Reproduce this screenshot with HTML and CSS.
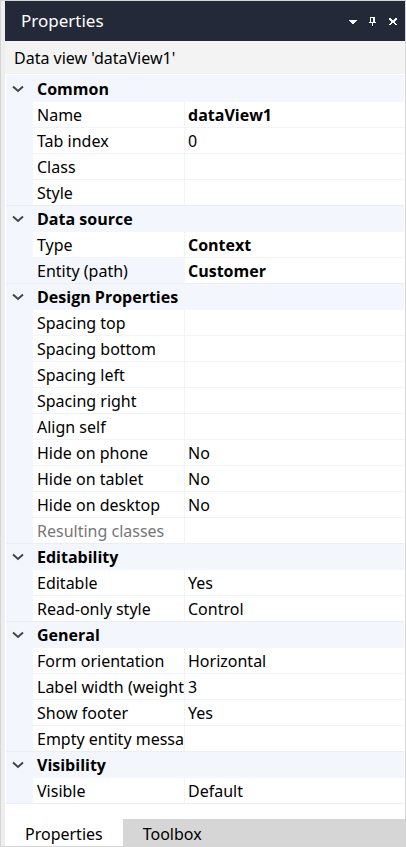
FILE: index.html
```
<!DOCTYPE html>
<html lang="en">
<head>
<meta charset="utf-8">
<meta name="viewport" content="width=device-width, initial-scale=1">
<title>Properties</title>
<link rel="stylesheet" href="styles.css">
</head>
<body>
<main class="panel">
  <header class="titlebar">
    <h1 class="title">Properties</h1>
    <div class="actions">
      <button class="action" type="button" aria-label="Menu"><svg width="8" height="12" viewBox="0 0 8 12" shape-rendering="crispEdges"><path d="M0 5h8v1H7v1H6v1H5v1H3V8H2V7H1V6H0z" fill="#fff"/></svg></button>
      <button class="action" type="button" aria-label="Pin"><svg width="8" height="12" viewBox="0 0 8 12" shape-rendering="crispEdges"><path d="M1 2h5v5h1v1H4v3H3V8H0V7h1zM2 3v4h2V3z" fill="#fff"/></svg></button>
      <button class="action" type="button" aria-label="Close"><svg width="8" height="12" viewBox="0 0 8 12" shape-rendering="crispEdges"><path d="M0 3h2v1h1v1h2V4h1V3h2v2H7v1H6v2h1v1h1v1H6V9H5V8H3v1H2v1H0V9h1V8h1V6H1V5H0z" fill="#fff"/></svg></button>
    </div>
  </header>
  <p class="subject">Data view 'dataView1'</p>
  <table class="grid">
    <colgroup><col class="col-toggle"><col class="col-name"><col></colgroup>
    <tbody>
      <tr class="group"><td><button class="toggle" type="button" aria-label="Collapse Common"><svg width="12" height="8" viewBox="0 0 12 8"><path d="M1 1.5l5 4.5 5-4.5" fill="none" stroke="#444" stroke-width="2"/></svg></button></td><th colspan="2" scope="rowgroup">Common</th></tr>
      <tr><td></td><th scope="row">Name</th><td class="changed">dataView1</td></tr>
      <tr><td></td><th scope="row">Tab index</th><td>0</td></tr>
      <tr><td></td><th scope="row">Class</th><td></td></tr>
      <tr><td></td><th scope="row">Style</th><td></td></tr>
    </tbody>
    <tbody>
      <tr class="group"><td><button class="toggle" type="button" aria-label="Collapse Data source"><svg width="12" height="8" viewBox="0 0 12 8"><path d="M1 1.5l5 4.5 5-4.5" fill="none" stroke="#444" stroke-width="2"/></svg></button></td><th colspan="2" scope="rowgroup">Data source</th></tr>
      <tr><td></td><th scope="row">Type</th><td class="changed">Context</td></tr>
      <tr class="selected"><td></td><th scope="row">Entity (path)</th><td class="changed">Customer</td></tr>
    </tbody>
    <tbody>
      <tr class="group"><td><button class="toggle" type="button" aria-label="Collapse Design Properties"><svg width="12" height="8" viewBox="0 0 12 8"><path d="M1 1.5l5 4.5 5-4.5" fill="none" stroke="#444" stroke-width="2"/></svg></button></td><th colspan="2" scope="rowgroup">Design Properties</th></tr>
      <tr><td></td><th scope="row">Spacing top</th><td></td></tr>
      <tr><td></td><th scope="row">Spacing bottom</th><td></td></tr>
      <tr><td></td><th scope="row">Spacing left</th><td></td></tr>
      <tr><td></td><th scope="row">Spacing right</th><td></td></tr>
      <tr><td></td><th scope="row">Align self</th><td></td></tr>
      <tr><td></td><th scope="row">Hide on phone</th><td>No</td></tr>
      <tr><td></td><th scope="row">Hide on tablet</th><td>No</td></tr>
      <tr><td></td><th scope="row">Hide on desktop</th><td>No</td></tr>
      <tr class="readonly"><td></td><th scope="row">Resulting classes</th><td></td></tr>
    </tbody>
    <tbody>
      <tr class="group"><td><button class="toggle" type="button" aria-label="Collapse Editability"><svg width="12" height="8" viewBox="0 0 12 8"><path d="M1 1.5l5 4.5 5-4.5" fill="none" stroke="#444" stroke-width="2"/></svg></button></td><th colspan="2" scope="rowgroup">Editability</th></tr>
      <tr><td></td><th scope="row">Editable</th><td>Yes</td></tr>
      <tr><td></td><th scope="row">Read-only style</th><td>Control</td></tr>
    </tbody>
    <tbody>
      <tr class="group"><td><button class="toggle" type="button" aria-label="Collapse General"><svg width="12" height="8" viewBox="0 0 12 8"><path d="M1 1.5l5 4.5 5-4.5" fill="none" stroke="#444" stroke-width="2"/></svg></button></td><th colspan="2" scope="rowgroup">General</th></tr>
      <tr><td></td><th scope="row">Form orientation</th><td>Horizontal</td></tr>
      <tr><td></td><th scope="row">Label width (weight</th><td>3</td></tr>
      <tr><td></td><th scope="row">Show footer</th><td>Yes</td></tr>
      <tr><td></td><th scope="row">Empty entity messa</th><td></td></tr>
    </tbody>
    <tbody>
      <tr class="group"><td><button class="toggle" type="button" aria-label="Collapse Visibility"><svg width="12" height="8" viewBox="0 0 12 8"><path d="M1 1.5l5 4.5 5-4.5" fill="none" stroke="#444" stroke-width="2"/></svg></button></td><th colspan="2" scope="rowgroup">Visibility</th></tr>
      <tr><td></td><th scope="row">Visible</th><td>Default</td></tr>
    </tbody>
  </table>
  <nav class="tabs" role="tablist">
    <button class="tab active" type="button" role="tab" aria-selected="true">Properties</button>
    <button class="tab" type="button" role="tab" aria-selected="false">Toolbox</button>
  </nav>
</main>
</body>
</html>
```

FILE: styles.css
```
* {
  box-sizing: border-box;
}

body {
  margin: 0;
  background: #efeeee;
  color: #000;
  font: 16px/24px "Noto Sans", "Open Sans", sans-serif;
}

button {
  padding: 0;
  border: 0;
  background: none;
  color: inherit;
  font: inherit;
}

.panel {
  display: flex;
  flex-direction: column;
  min-height: 100vh;
  padding-left: 4px;
  border: 1px solid #d5d5d5;
}

.titlebar {
  display: flex;
  align-items: center;
  justify-content: space-between;
  height: 40px;
  padding: 0 8px 0 16px;
  background: #232938;
  color: #fff;
}

.title {
  margin: 0;
  font-size: 17px;
  font-weight: 400;
}

.actions {
  display: flex;
  gap: 12px;
}

.action {
  display: flex;
}

.subject {
  height: 34px;
  margin: 0;
  padding: 5px 9px;
  border-bottom: 1px solid #fff;
  background: #f3f3f3;
}

.grid {
  width: 100%;
  border: 1px solid #fff;
  border-top-color: #f3f6fc;
  border-bottom: 0;
  border-spacing: 0;
  table-layout: fixed;
  background: #fff;
}

.col-toggle {
  width: 27px;
}

.col-name {
  width: 152px;
}

.grid th,
.grid td {
  height: 26px;
  padding: 1px 0 0 3px;
  border-bottom: 1px solid #f0f3f8;
  overflow: hidden;
  font-weight: 400;
  text-align: left;
  white-space: nowrap;
}

.grid th {
  padding-left: 4px;
  border-right: 1px solid #f0f3f8;
}

.grid td:first-child,
.grid .group th,
.grid .selected th {
  border-color: #f3f6fc;
  background: #f3f6fc;
}

.grid td:first-child {
  padding: 0 0 0 6px;
}

.grid tr:last-child th,
.grid tr:last-child td {
  border-bottom-color: #ebeef2;
}

.grid .group th,
.grid .changed {
  font-family: "Open Sans", "Noto Sans", sans-serif;
  font-weight: 700;
}

.grid .readonly th {
  color: #767676;
}

.toggle {
  display: flex;
}

.tabs {
  display: flex;
  flex: 1;
  align-items: stretch;
  padding-top: 15px;
  background: #fff;
}

.tab {
  flex: 1;
  padding: 2px 20px 0;
  background: #d6d6d6;
  text-align: left;
}

.tab.active {
  flex: none;
  background: #fff;
}
```
